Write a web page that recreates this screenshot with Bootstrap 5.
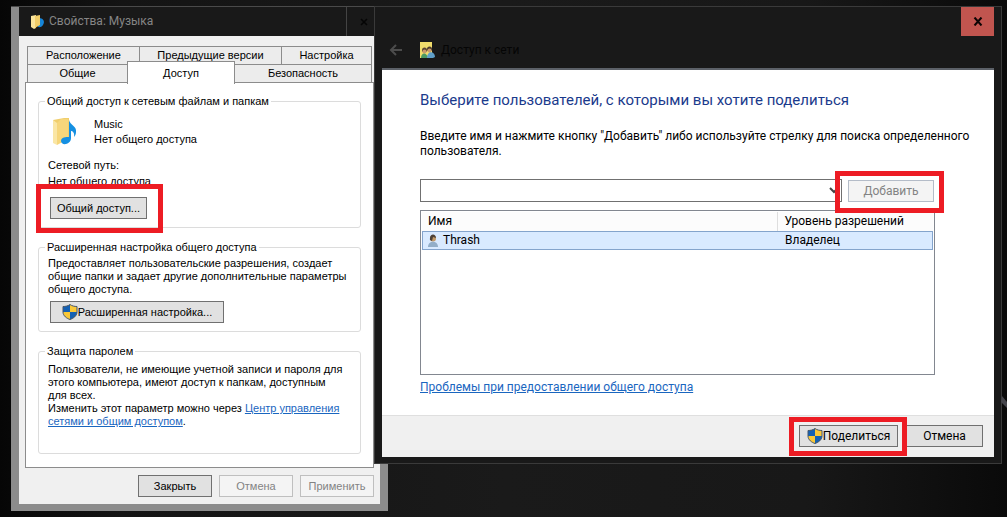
<!DOCTYPE html>
<html lang="ru">
<head>
<meta charset="utf-8">
<meta name="viewport" content="width=device-width, initial-scale=1">
<title>Доступ к сети</title>
<link href="https://cdn.jsdelivr.net/npm/bootstrap@5.3.0/dist/css/bootstrap.min.css" rel="stylesheet">
<style>
body{background:linear-gradient(90deg,#060606,#141414 12%,#1a1a1a 50%,#181818 80%,#0a0a0a);min-height:100vh;font-family:Roboto,"Noto Sans",sans-serif;font-size:12px;line-height:15px;color:#000;overflow:hidden}
a{color:#1a66bf}
.desk{min-height:100vh}
.win{position:absolute;top:6px;border-top:1px solid #4a4a4a}
.props{left:11px;width:377px;background:#8c8c8c;padding:0 8px 7px}
.share{left:374px;right:5px;background:#191919;border:1px solid #3a3a3a;padding:0 7px 6px}
/* properties window */
.props-bar{height:29px;background:#191919;color:#868686}
.props-close{width:34px;height:29px;border:0;border-left:1px solid #444;background:none;padding:0}
.props-body{background:#f0f0f0;font-family:"Liberation Sans",Arial,sans-serif;font-size:11px;padding:10px 6px 7px}
.tabs{margin:0 3px 0 2px}
.tabs button{border:1px solid #8c8c8c;background:#ececec;height:19px;padding:0;line-height:17px;margin-right:-1px;color:#000}
.tabs .tabs-row + .tabs-row{margin-top:-1px}
.tabs .picked{background:#fff;height:23px;margin-top:-3px;margin-bottom:-1px;border-bottom:0;position:relative;z-index:1;line-height:19px}
.w1{width:113px}.w2{width:143px}.w3{width:101px}.w4{width:108px}
.sheet{background:#fff;border:1px solid #8c8c8c;height:386px;padding:11px 12px 0;margin-top:-1px}
.group{border:1px solid #dcdcdc;border-radius:3px;padding:0 9px;line-height:13px}
.group legend{float:none;width:auto;font-size:inherit;line-height:14px;margin:0 0 0 -3px;padding:0 2px}
.g1{height:134px}
.g2{height:92px;margin-top:12px}
.g3{height:110px;margin-top:12px}
.folder{line-height:15px;padding-top:9px;margin-bottom:12px}
.net{margin-bottom:3px}
.sharebtn{margin:6px 0 0 2px;width:97px}
.g2 .desc{padding-top:3px}
.g3 .desc{padding:5px 6px 0 0}
.advbtn{width:174px;margin:5px 0 0 2px}
.foot{gap:7px;padding-top:7px}
.foot .wbtn{width:74px}
/* buttons and the red frames over them */
.wbtn{border:1px solid #707070;background:#e1e1e1;height:22px;padding:0;line-height:18px;color:#000;white-space:nowrap}
.wbtn:disabled{border-color:#bfbfbf;background:#f4f4f4;color:#838383}
.marked{position:relative}
.marked::after{content:"";position:absolute;border:5px solid #ed1c24;z-index:2;pointer-events:none}
.m-share::after{inset:-14px -17px -15px -15px}
.m-add::after{inset:-10px -11px -12px -14px}
.m-go::after{inset:-9px -10px -10px -11px}
/* sharing window */
.share-bar{height:61px}
.crumbs{padding:25px 0 0 7px}
.crumbs span{color:#050505}
.pic{margin:0 6px 0 17px}
.share-close{width:33px;height:29px;border:0;background:#c1554f;padding:0}
.share-main{background:#fff;border-top:2px solid #5c6168;padding:20px 59px 20px 38px}
.share-main h1{font-size:15px;line-height:20px;color:#1a3a8c;font-weight:400;margin:0 0 19px}
.intro{margin:0 -46px 20px 0}
.combo{border:1px solid #707070;border-radius:0;height:23px;appearance:none;background:#fff;padding:0 20px 0 6px}
.combo-arrow{right:3px;top:7px}
.addbtn{width:86px;margin:0 1px 0 6px}
.addbtn:disabled{border-color:#b4bcc8}
.users{border:1px solid #828790;height:165px;padding:1px}
.users table{width:100%;table-layout:fixed;border-collapse:collapse}
.users th{font-weight:400;height:19px;line-height:15px;padding:2px 6px;background:#fcfcfc}
.users th + th{border-left:1px solid #dedede;width:156px;padding-left:7px}
.users td{height:19px;padding:2px 5px}
.users td + td{padding-left:8px}
.users tbody tr{background:#d9eaff;outline:1px solid #84a4cc;outline-offset:-1px}
.trouble{margin-top:5px}
.share-foot{background:#f0f0f0;border-top:1px solid #dfdfdf;padding:9px 11px 10px}
.gobtn{width:99px}
.cancelbtn{width:77px;margin-left:8px}
</style>
</head>
<body>
<main class="desk position-relative">
<section class="win props" aria-label="Свойства: Музыка">
  <header class="props-bar d-flex align-items-center ps-2">
    <svg class="ms-1" width="14" height="16" viewBox="0 0 14 16"><path d="M8 4c5 0 6 4 4 7-2 3-6 3-5 0z" fill="#1685d8"/><path d="M0 2l5-1v13l-2 1-3-2z" fill="#fbe49a"/><path d="M4 2l5-1v10l-5 3z" fill="#f2cd68"/></svg>
    <span class="flex-grow-1 ps-1">Свойства: Музыка</span>
    <button class="props-close" aria-label="Закрыть"><svg width="8" height="8" viewBox="0 0 8 8"><path d="M1 1l6 6M7 1L1 7" stroke="#050505" stroke-width="1.500"/></svg></button>
  </header>
  <div class="props-body">
    <nav class="tabs" aria-label="Вкладки">
      <div class="tabs-row d-flex"><button class="w1">Расположение</button><button class="w2">Предыдущие версии</button><button class="flex-fill">Настройка</button></div>
      <div class="tabs-row d-flex"><button class="w3">Общие</button><button class="w4 picked">Доступ</button><button class="flex-fill">Безопасность</button></div>
    </nav>
    <div class="sheet">
      <fieldset class="group g1">
        <legend>Общий доступ к сетевым файлам и папкам</legend>
        <div class="folder d-flex">
          <svg class="ms-1 me-3" width="26" height="30" viewBox="0 0 26 30"><path d="M1 3l11-2h5v21H4z" fill="#f0ce6c"/><path d="M1 3l4 3v22l-4-2z" fill="#fae6a5"/><path d="M5 6l4-4h7v20L5 28z" fill="#f6d67b"/><path d="M17 3c1 5 8 6 7 12 0 2-1 4-2 5 1-5-2-6-3-6v7c0 7-10 8-10 3 0-4 5-4 8-4z" fill="#1590e2"/></svg>
          <div>Music<br>Нет общего доступа</div>
        </div>
        <div class="net">Сетевой путь:</div>
        <div class="net">Нет общего доступа</div>
        <button class="wbtn marked m-share sharebtn">Общий доступ...</button>
      </fieldset>
      <fieldset class="group g2">
        <legend>Расширенная настройка общего доступа</legend>
        <div class="desc">Предоставляет пользовательские разрешения, создает общие папки и задает другие дополнительные параметры общего доступа.</div>
        <button class="wbtn advbtn d-flex align-items-center justify-content-center"><svg width="16" height="16" viewBox="0 0 16 16"><path d="M8 .5C6 2 3.500 2.500 1 2.500V8c0 4 4 6.500 7 7.500 3-1 7-3.500 7-7.500V2.500C12.500 2.500 10 2 8 .5z" fill="#f9c838"/><path d="M8 .5C6 2 3.500 2.500 1 2.500V8h7zM8 8h7c0 4-4 6.500-7 7.500z" fill="#1461b4"/><path d="M8 .5C6 2 3.500 2.500 1 2.500V8c0 4 4 6.500 7 7.500 3-1 7-3.500 7-7.500V2.500C12.500 2.500 10 2 8 .5z" fill="none" stroke="#46566a"/></svg>Расширенная настройка...</button>
      </fieldset>
      <fieldset class="group g3">
        <legend>Защита паролем</legend>
        <div class="desc">Пользователи, не имеющие учетной записи и пароля для этого компьютера, имеют доступ к папкам, доступным для всех.<br>Изменить этот параметр можно через <a href="#">Центр управления сетями и общим доступом</a>.</div>
      </fieldset>
    </div>
    <div class="foot d-flex justify-content-end"><button class="wbtn">Закрыть</button><button class="wbtn" disabled>Отмена</button><button class="wbtn" disabled>Применить</button></div>
  </div>
</section>

<section class="win share" aria-label="Доступ к сети">
  <header class="share-bar d-flex">
    <div class="d-flex align-items-center flex-grow-1 crumbs">
      <svg width="14" height="12" viewBox="0 0 14 12"><path d="M13 6H2M7 1L2 6l5 5" fill="none" stroke="#4c4c4c" stroke-width="2"/></svg>
      <svg class="pic" width="15" height="17" viewBox="0 0 15 17"><path d="M0 0h12v16H0z" fill="#f1dc6c"/><circle cx="4.500" cy="8" r="2.500" fill="#5b4634"/><circle cx="9.500" cy="7" r="2.500" fill="#4a3a2c"/><circle cx="9.500" cy="8.500" r="2" fill="#c99a6c"/><circle cx="4.500" cy="9.500" r="2" fill="#c99a6c"/><path d="M1 16c0-6 6-6 7 0z" fill="#4d9a63"/><path d="M7 16c0-8 8-7 8-1l-2 1z" fill="#5f9fc9"/></svg>
      <span>Доступ к сети</span>
    </div>
    <button class="share-close" aria-label="Закрыть"><svg width="10" height="9" viewBox="0 0 10 9"><path d="M1.500 .5l7 8M8.500 .5l-7 8" stroke="#0c0404" stroke-width="2"/></svg></button>
  </header>
  <div class="share-main">
    <h1>Выберите пользователей, с которыми вы хотите поделиться</h1>
    <p class="intro">Введите имя и нажмите кнопку "Добавить" либо используйте стрелку для поиска определенного пользователя.</p>
    <div class="d-flex align-items-center mb-2">
      <div class="position-relative flex-grow-1"><select class="combo w-100 d-block" aria-label="Имя пользователя"><option></option></select><svg class="combo-arrow position-absolute" width="10" height="8" viewBox="0 0 10 8"><path d="M1 2l4 4 4-4" fill="none" stroke="#444" stroke-width="2"/></svg></div>
      <button class="wbtn marked m-add addbtn" disabled>Добавить</button>
    </div>
    <div class="users">
      <table><thead><tr><th>Имя</th><th>Уровень разрешений</th></tr></thead>
      <tbody><tr><td><svg class="me-1" width="12" height="14" viewBox="0 0 12 14"><path d="M1 13c0-7 10-7 10 0z" fill="#93aec8"/><circle cx="6" cy="4.500" r="3" fill="#c39a68"/><path d="M3 6c-1-7 6-7 6-2L6 3 5 7z" fill="#4e4238"/></svg>Thrash</td><td>Владелец</td></tr></tbody></table>
    </div>
    <a class="trouble d-inline-block" href="#">Проблемы при предоставлении общего доступа</a>
  </div>
  <footer class="share-foot d-flex justify-content-end">
    <button class="wbtn marked m-go gobtn d-flex align-items-center justify-content-center"><svg width="16" height="16" viewBox="0 0 16 16"><path d="M8 .5C6 2 3.500 2.500 1 2.500V8c0 4 4 6.500 7 7.500 3-1 7-3.500 7-7.500V2.500C12.500 2.500 10 2 8 .5z" fill="#f9c838"/><path d="M8 .5C6 2 3.500 2.500 1 2.500V8h7zM8 8h7c0 4-4 6.500-7 7.500z" fill="#1461b4"/><path d="M8 .5C6 2 3.500 2.500 1 2.500V8c0 4 4 6.500 7 7.500 3-1 7-3.500 7-7.500V2.500C12.500 2.500 10 2 8 .5z" fill="none" stroke="#46566a"/></svg>Поделиться</button>
    <button class="wbtn cancelbtn">Отмена</button>
  </footer>
</section>
<svg class="position-absolute end-0" style="top:396px" width="6" height="14" viewBox="0 0 6 14" aria-hidden="true"><path d="M1 0l5 6v6L0 6z" fill="#45454b"/></svg>
</main>
<script src="https://cdn.jsdelivr.net/npm/bootstrap@5.3.0/dist/js/bootstrap.bundle.min.js"></script>
</body>
</html>
